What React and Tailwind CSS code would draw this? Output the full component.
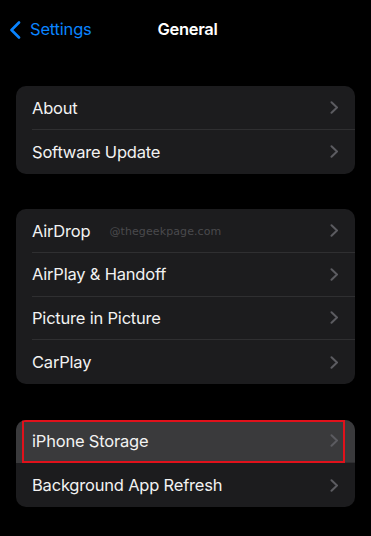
import React from "react";

const groups = [
  ["About", "Software Update"],
  ["AirDrop", "AirPlay & Handoff", "Picture in Picture", "CarPlay"],
  ["iPhone Storage", "Background App Refresh"],
];

const Chevron = () => (
  <svg width="9" height="13" viewBox="0 0 9 13" fill="none">
    <path
      d="M1.5 1.2L7 6.5L1.5 11.8"
      stroke="#5b5b60"
      strokeWidth="2"
      strokeLinecap="round"
      strokeLinejoin="round"
    />
  </svg>
);

const Row = ({ label, last, highlight }) => (
  <div
    className={`relative h-[43.75px] flex items-stretch pl-4 ${
      highlight ? "bg-[#3a3a3c]" : ""
    }`}
  >
    <div
      className={`flex-1 flex items-center justify-between pr-4 ${
        last ? "" : "border-b border-[#2f2f31]"
      }`}
    >
      <div className="flex items-center pt-[1px]">
        <span className="text-[16.5px] text-[#f2f2f2] tracking-[-0.2px]">{label}</span>
        {label === "AirDrop" && (
          <span className="ml-[19px] mt-[2px] text-[11px] text-[#4a4a4d] tracking-[0.1px] font-['DejaVu_Sans',sans-serif]">
            @thegeekpage.com
          </span>
        )}
      </div>
      <Chevron />
    </div>
    {highlight && (
      <div className="absolute left-[6px] right-[10px] top-0 bottom-0 border-2 border-[#e0111b]" />
    )}
  </div>
);

export default function App() {
  return (
    <div className="w-[371px] h-[536px] bg-black overflow-hidden font-['Inter','Liberation_Sans',sans-serif]">
      <div className="h-[58px] grid grid-cols-[1fr_auto_1fr] items-center">
        <div className="flex items-center pl-[9px] pt-[1px]">
          <svg width="12" height="18" viewBox="0 0 12 18" fill="none">
            <path
              d="M10 1.5L2.5 9L10 16.5"
              stroke="#0a84ff"
              strokeWidth="2.6"
              strokeLinecap="round"
              strokeLinejoin="round"
            />
          </svg>
          <span className="ml-[9px] text-[16.5px] text-[#0a84ff] tracking-[-0.2px]">
            Settings
          </span>
        </div>
        <div className="pl-[4px] text-[16.5px] font-semibold text-white tracking-[-0.3px]">
          General
        </div>
        <div />
      </div>
      <div className="flex flex-col gap-[35.5px] px-4 pt-[28px]">
        {groups.map((g, gi) => (
          <div key={gi} className="bg-[#1c1c1e] rounded-[10px] overflow-hidden">
            {g.map((label, i) => (
              <Row
                key={label}
                label={label}
                last={i === g.length - 1}
                highlight={label === "iPhone Storage"}
              />
            ))}
          </div>
        ))}
      </div>
    </div>
  );
}
